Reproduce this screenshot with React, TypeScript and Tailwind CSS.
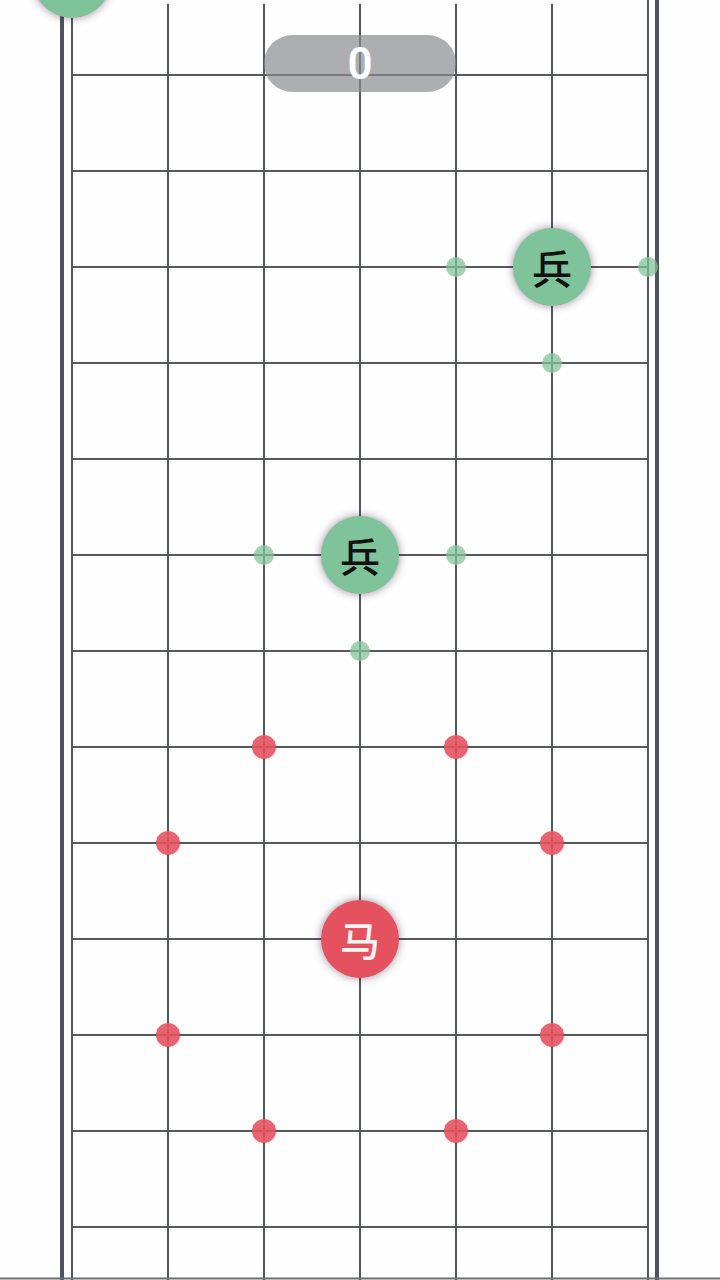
import React from "react";

const cols = [72, 168, 264, 360, 456, 552, 648];
const rows = Array.from({ length: 13 }, (_, i) => 75 + i * 96);

const greenDots: [number, number][] = [
  [456, 267],
  [648, 267],
  [552, 363],
  [264, 555],
  [456, 555],
  [360, 651],
];
const redDots: [number, number][] = [
  [264, 747],
  [456, 747],
  [168, 843],
  [552, 843],
  [168, 1035],
  [552, 1035],
  [264, 1131],
  [456, 1131],
];

type Piece = { x: number; y: number; label: string; color: "green" | "red" };
const pieces: Piece[] = [
  { x: 72, y: -21, label: "", color: "green" },
  { x: 552, y: 267, label: "兵", color: "green" },
  { x: 360, y: 555, label: "兵", color: "green" },
  { x: 360, y: 939, label: "马", color: "red" },
];

export default function App() {
  return (
    <div className="relative w-[720px] h-[1280px] overflow-hidden bg-[#fefefe]">
      <svg width={720} height={1280} className="block" viewBox="0 0 720 1280">
        {rows.map((y) => (
          <line key={"h" + y} x1={72} x2={648} y1={y} y2={y} stroke="#55595d" strokeWidth={2} />
        ))}
        {cols.map((x, i) => (
          <line
            key={"v" + x}
            x1={x}
            x2={x}
            y1={i === 0 || i === cols.length - 1 ? 0 : 4}
            y2={1280}
            stroke="#55595d"
            strokeWidth={2}
          />
        ))}
        <line x1={62} x2={62} y1={0} y2={1280} stroke="#50545a" strokeWidth={4} />
        <line x1={657} x2={657} y1={0} y2={1280} stroke="#50545a" strokeWidth={4} />
        <line x1={0} x2={720} y1={1278.5} y2={1278.5} stroke="#6b6f73" strokeWidth={2} />
      </svg>

      {greenDots.map(([x, y]) => (
        <div
          key={"g" + x + "-" + y}
          className="absolute w-[20px] h-[20px] rounded-full bg-[#7fc39a]/75"
          style={{ left: x - 10, top: y - 10 }}
        />
      ))}
      {redDots.map(([x, y]) => (
        <div
          key={"r" + x + "-" + y}
          className="absolute w-[24px] h-[24px] rounded-full bg-[#e5525f]/90"
          style={{ left: x - 12, top: y - 12 }}
        />
      ))}

      {pieces.map((p) => (
        <div
          key={"p" + p.x + "-" + p.y}
          className={
            "absolute w-[78px] h-[78px] rounded-full flex items-center justify-center shadow-[0_0_8px_rgba(70,40,70,0.55)] text-[40px] font-medium leading-none [font-family:'Noto_Sans_CJK_SC',sans-serif] " +
            (p.color === "green" ? "bg-[#7fc39a] text-[#111]" : "bg-[#e5525f] text-[#fff3f5]")
          }
          style={{ left: p.x - 39, top: p.y - 39 }}
        >
          {p.label}
        </div>
      ))}

      <div className="absolute left-[264px] top-[35px] w-[192px] h-[57px] rounded-full bg-[#8a8b90]/70 flex items-center justify-center">
        <span className="text-white text-[44px] font-semibold leading-none [font-family:Roboto,sans-serif]">
          0
        </span>
      </div>
    </div>
  );
}
